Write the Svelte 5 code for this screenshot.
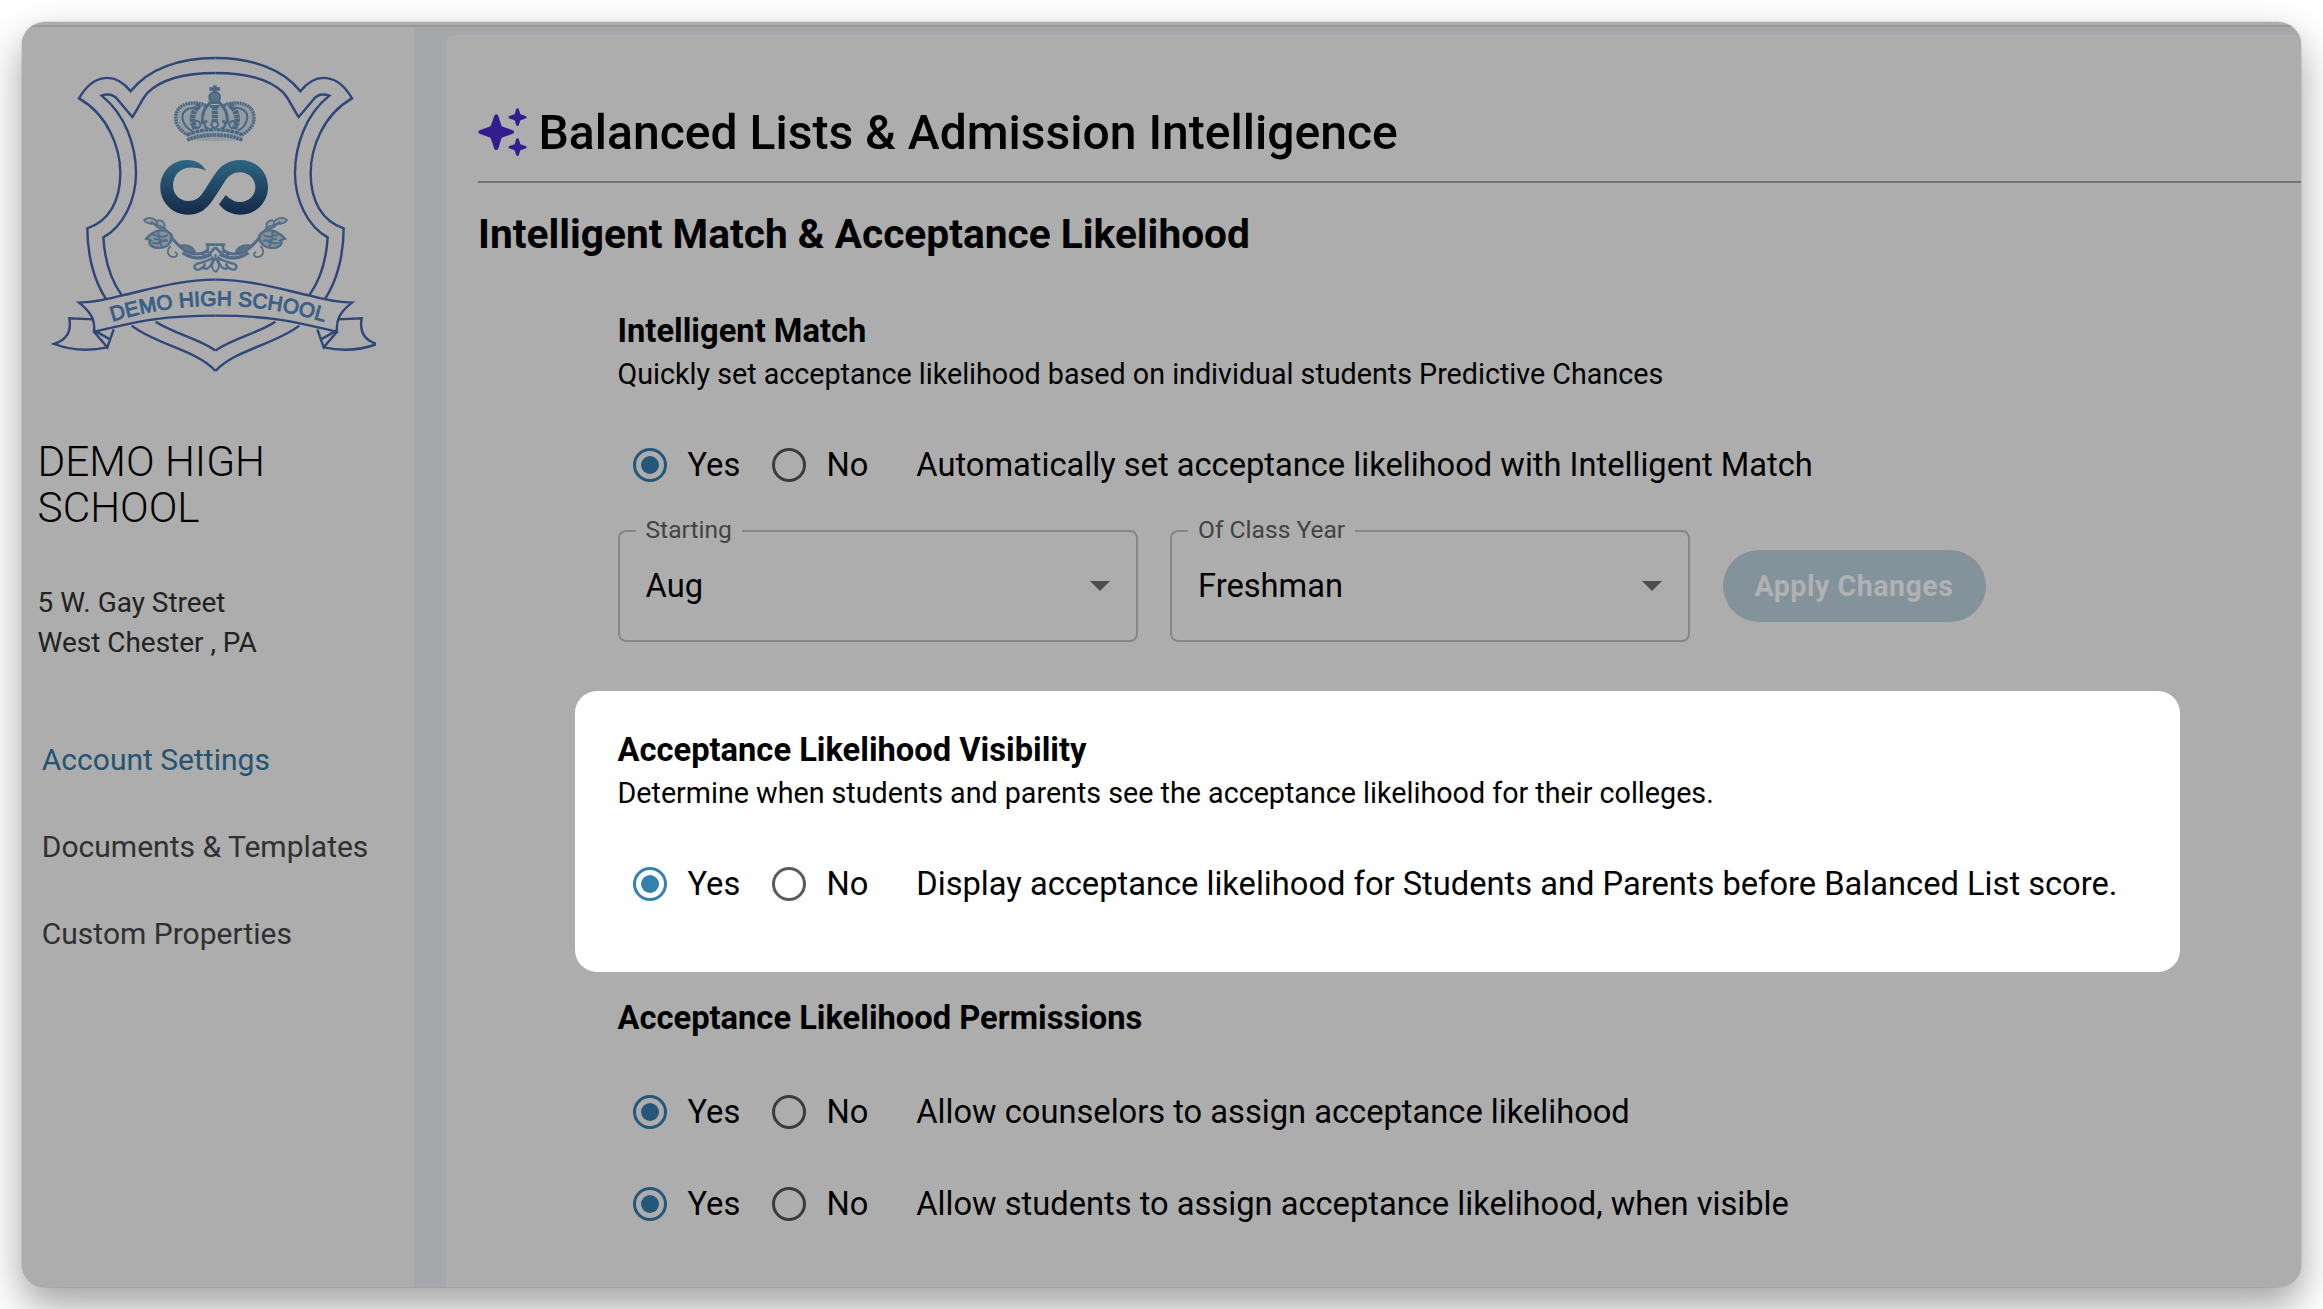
<script>
  const nav = [
    { label: 'Account Settings', active: true },
    { label: 'Documents & Templates', active: false },
    { label: 'Custom Properties', active: false }
  ];
  const selects = [
    { label: 'Starting', value: 'Aug' },
    { label: 'Of Class Year', value: 'Freshman' }
  ];
</script>

{#snippet radioRow(text)}
  <div class="radio-row">
    <span class="option"><i class="radio on"></i>Yes</span>
    <span class="option"><i class="radio"></i>No</span>
    <span class="caption">{text}</span>
  </div>
{/snippet}

{#snippet shieldHalf()}
  <path d="M646.500 174 C540 174 445 205 392 274 C345 215 280 220 237 295 C325 345 361 445 361 520 C361 605 325 665 262 685 C262 760 280 840 318 897" />
  <path d="M646.500 219 C570 219 490 232 443 278 C425 298 415 325 397 351 L354 300 C342 284 325 280 305 287 C378 345 408 440 408 520 C408 600 370 680 310 712 C314 780 333 840 364 884" />
  <path d="M395 977 C470 1035 590 1050 646.500 1113" />
  <path d="M467 965 C520 1000 605 1020 646.500 1052" />
  <path d="M646.500 839 C540 839 440 870 363 887 Q300 905 237 908 C272 935 286 960 282 995 C380 975 450 947 646.500 947" />
  <path d="M282 995 L322 1042 L341 988 M284 992 L330 1018" />
  <path d="M281 958 L208 955 C216 1000 195 1022 162 1032 C210 1050 270 1053 322 1042" />
{/snippet}

{#snippet crownHalf()}
  <path d="M560 404 C520 376 516 330 556 314 C590 304 615 308 640 322 L646.500 322 V424 L566 420 Z" fill="#60768c" fill-opacity="0.3" stroke="none" />
  <path d="M626 320 C600 303 533 300 529 350 C528 378 545 392 563 404" stroke-width="10" stroke-dasharray="6 2" />
  <path d="M600 326 C575 318 548 330 549 352 C551 374 562 384 578 393" stroke-width="6" />
  <path d="M601 314 C577 336 574 360 588 386" stroke-width="17" stroke-dasharray="10 2" />
  <path d="M634 308 C612 325 606 345 610 372" stroke-width="9" />
  <circle cx="592" cy="374" r="11" stroke-width="6" />
  <path d="M624 362 C612 366 612 384 628 386" stroke-width="7" />
  <path d="M562 405 C590 393 615 389 646.500 389" stroke-width="10" stroke-dasharray="12 2" />
  <path d="M564 420 C590 409 615 405 646.500 405" stroke-width="11" stroke-dasharray="8 2" />
{/snippet}

{#snippet garlandHalf()}
  <path d="M432 660 C448 648 462 656 470 664 C484 656 496 668 494 682 C480 688 468 680 462 672 C450 672 438 670 432 660 Z" fill="#60768c" fill-opacity="0.25" />
  <path d="M452 664 C468 676 478 678 486 678 M470 664 L474 680 M486 680 C500 690 506 694 512 706" stroke-width="5" />
  <path d="M438 716 C452 700 476 684 500 694 C520 702 520 716 508 730 C496 746 466 748 452 736 Q444 728 452 722 Q444 718 438 716 Z" stroke-width="7" fill="#60768c" fill-opacity="0.5" />
  <path d="M458 704 C476 708 492 716 504 704 M454 728 C472 734 486 726 500 718 M474 694 C478 712 476 726 486 740 M462 716 Q480 722 504 722" stroke-width="6" />
  <path d="M512 738 C498 750 502 770 520 771 C532 771 536 760 524 756" stroke-width="5" />
  <path d="M512 708 C524 726 538 740 556 752 C580 766 604 764 626 752" stroke-width="9" />
  <path d="M542 736 C560 732 582 740 586 758 C566 760 550 752 542 736 Z" fill="#5a7189" />
  <path d="M548 758 C572 776 606 780 634 762" stroke-width="10" />
  <path d="M646.500 734 L622 734 C626 744 624 752 614 756 C604 762 612 772 622 766 C634 758 638 748 646.500 742" stroke-width="8" />
  <path d="M640 770 C628 784 606 786 590 792 C578 798 584 812 598 808 C610 804 618 794 612 790 M640 774 C636 798 622 812 610 804" stroke-width="7" />
  <path d="M646.500 762 L646.500 780 M646.500 816 C632 806 634 792 646.500 776" stroke-width="5" />
{/snippet}

<div class="window">
  <div class="topbar"></div>
  <div class="body">
    <aside>
      <svg class="crest" viewBox="150 150 978 990" fill="none">
        <defs>
          <linearGradient id="loop" x1="0" y1="480" x2="0" y2="643" gradientUnits="userSpaceOnUse">
            <stop offset="0" stop-color="#2d6681" />
            <stop offset="1" stop-color="#152a49" />
          </linearGradient>
          <path id="banner" d="M337 965 Q650 868 975 966" />
        </defs>
        <g stroke="#2f4679" stroke-width="7.200">
          {@render shieldHalf()}
          <g transform="translate(1293 0) scale(-1 1)">{@render shieldHalf()}</g>
        </g>
        <g transform="translate(-2 0)" stroke="#4b6882">
          {@render crownHalf()}
          <g transform="translate(1293 0) scale(-1 1)">{@render crownHalf()}</g>
          <path d="M646.500 256 V282 M630 267 H662" stroke-width="11" />
          <circle cx="646" cy="292" r="16" fill="#5a7189" stroke-width="6" />
          <path d="M627 308 H665 M632 319 H660" stroke-width="8" />
          <path d="M646.500 320 V366" stroke-width="18" stroke-dasharray="10 2" />
          <circle cx="646" cy="373" r="10" stroke-width="6" />
        </g>
        <path fill="url(#loop)" d="M619 512 C603 488 585 480 560 480 C515 480 481 517 481 562 C481 607 517 644 562 644 C600 644 622 627 645 590 L674 545 C687 525 700 517 720 517 C746 517 766 537 766 562 C766 587 746 606 720 606 C703 606 690 598 677 585 L657 613 C672 633 695 644 722 644 C768 644 804 607 804 562 C804 516 768 480 722 480 C685 480 662 495 641 528 L612 573 C598 595 585 603 565 603 C539 603 519 584 519 556 C519 513 560 487 619 512 Z" />
        <g stroke="#526d87" stroke-width="5">
          {@render garlandHalf()}
          <g transform="translate(1293 0) scale(-1 1)">{@render garlandHalf()}</g>
        </g>
        <text class="banner-text"><textPath href="#banner" textLength="646">DEMO HIGH SCHOOL</textPath></text>
      </svg>
      <h4>DEMO HIGH SCHOOL</h4>
      <address>5 W. Gay Street<br />West Chester , PA</address>
      <nav>
        {#each nav as item}
          <span class:active={item.active}>{item.label}</span>
        {/each}
      </nav>
    </aside>

    <main>
      <h1>
        <svg class="sparkle" viewBox="0 0 49 49" fill="#331c90">
          <path d="M18.200 6.300 Q19.800 6.300 20.300 8 L23.600 18.200 L34 22 Q36.200 22.700 36.200 24 Q36.200 25.300 34 26 L23.600 29.800 L20.300 40.500 Q19.800 42 18.200 42 Q16.700 42 16.200 40.500 L12.600 29.800 L2.300 26 Q.300 25.300 .300 24 Q.300 22.700 2.300 22 L12.600 18.200 L16.200 8 Q16.700 6.300 18.200 6.300 Z" />
          <path id="star" d="M39.500 .300 Q40.500 .300 40.800 1.300 L42.400 6.200 L47.500 8 Q48.600 8.400 48.600 9.200 Q48.600 10 47.500 10.400 L42.400 12.200 L40.800 17.100 Q40.500 18.100 39.500 18.100 Q38.500 18.100 38.200 17.100 L36.600 12.200 L31.500 10.400 Q30.500 10 30.500 9.200 Q30.500 8.400 31.500 8 L36.600 6.200 L38.200 1.300 Q38.500 .300 39.500 .300 Z" />
          <use href="#star" y="30" />
        </svg>
        Balanced Lists &amp; Admission Intelligence
      </h1>
      <h2>Intelligent Match &amp; Acceptance Likelihood</h2>

      <section>
        <h3>Intelligent Match</h3>
        <p>Quickly set acceptance likelihood based on individual students Predictive Chances</p>
        {@render radioRow('Automatically set acceptance likelihood with Intelligent Match')}
        <div class="controls">
          {#each selects as s}
            <div class="select">
              <span class="legend">{s.label}</span>
              <span>{s.value}</span>
              <svg viewBox="0 0 20 10" width="20" height="10"><path d="M0 0H20L10 10Z" fill="#4e4e4e" /></svg>
            </div>
          {/each}
          <button disabled>Apply Changes</button>
        </div>
      </section>

      <section class="spotlight">
        <h3>Acceptance Likelihood Visibility</h3>
        <p>Determine when students and parents see the acceptance likelihood for their colleges.</p>
        {@render radioRow('Display acceptance likelihood for Students and Parents before Balanced List score.')}
      </section>

      <section class="permissions">
        <h3>Acceptance Likelihood Permissions</h3>
        {@render radioRow('Allow counselors to assign acceptance likelihood')}
        {@render radioRow('Allow students to assign acceptance likelihood, when visible')}
      </section>
    </main>
  </div>
</div>

<style>
  :global(body) {
    background: #fff;
    overflow: hidden;
  }
  .window {
    box-sizing: border-box;
    width: 2279px;
    height: 1265px;
    margin: 22px;
    border-radius: 23px;
    overflow: hidden;
    display: flex;
    flex-direction: column;
    background: #adadad;
    color: #020202;
    font-family: Roboto, 'Liberation Sans', sans-serif;
    box-shadow: 0 0 0 1px rgba(0, 0, 0, 0.08), 0 18px 40px rgba(0, 0, 0, 0.38);
  }
  .topbar {
    flex: none;
    height: 3px;
    border-bottom: 2px solid #999;
  }
  .body {
    flex: 1;
    display: flex;
    background: #a5a7aa;
  }
  aside {
    box-sizing: border-box;
    width: 392px;
    flex: none;
    padding: 23px 0 0 15.6px;
    background: #adadad;
  }
  .crest {
    display: block;
    width: 326px;
    height: 330px;
    margin-left: 12.4px;
  }
  .banner-text {
    font: 62px 'Liberation Sans', sans-serif;
    fill: #3a5f86;
    stroke: #3a5f86;
    stroke-width: 3px;
  }
  h1, h2, h3, h4, p {
    margin: 0;
  }
  h4 {
    width: 300px;
    margin-top: 59px;
    font-size: 42.3px;
    font-weight: 300;
    line-height: 46px;
  }
  address {
    margin-top: 52px;
    font-size: 27.95px;
    font-style: normal;
    line-height: 40px;
    color: #222;
  }
  nav {
    display: flex;
    flex-direction: column;
    gap: 46.8px;
    margin: 77px 0 0 4.2px;
    font-size: 30.02px;
    line-height: 40px;
    color: #303030;
  }
  nav .active {
    color: #24546f;
  }
  main {
    box-sizing: border-box;
    flex: 1;
    margin: 8px 0 0 32px;
    padding: 70px 0 0 32px;
    border-top-left-radius: 8px;
    background: #adadad;
  }
  h1 {
    display: flex;
    align-items: center;
    gap: 12px;
    padding-bottom: 19.6px;
    border-bottom: 2px solid #727272;
    font-size: 48.05px;
    font-weight: 500;
    line-height: 56px;
    white-space: nowrap;
  }
  .sparkle {
    width: 49px;
    height: 49px;
    margin-left: -0.5px;
    margin-top: -2px;
  }
  h2 {
    margin-top: 27px;
    font-size: 40.68px;
    font-weight: 700;
    line-height: 48px;
  }
  section {
    margin: 51px 0 0 139.5px;
  }
  h3 {
    font-size: 32.68px;
    font-weight: 700;
    line-height: 44px;
  }
  p {
    margin-top: 1.2px;
    font-size: 28.68px;
    line-height: 40px;
  }
  .radio-row {
    display: grid;
    grid-template-columns: 139px 144px auto;
    margin-top: 48.8px;
    padding-left: 15.8px;
    font-size: 32.67px;
    line-height: 44px;
    white-space: nowrap;
  }
  .option {
    display: flex;
    align-items: center;
    gap: 21.2px;
  }
  .radio {
    box-sizing: border-box;
    width: 34px;
    height: 34px;
    margin-right: -1px;
    border: 3.4px solid #3b3b3b;
    border-radius: 50%;
    display: grid;
    place-items: center;
  }
  .radio.on {
    border-color: #24577a;
  }
  .radio.on::after {
    content: '';
    width: 18px;
    height: 18px;
    border-radius: 50%;
    background: #24577a;
  }
  .controls {
    display: flex;
    align-items: center;
    gap: 32.5px;
    margin-top: 43.4px;
  }
  .select {
    position: relative;
    box-sizing: border-box;
    width: 520px;
    height: 112px;
    display: flex;
    align-items: center;
    justify-content: space-between;
    padding: 0 26px;
    border: 2px solid #868686;
    border-radius: 8px;
    font-size: 32.67px;
    line-height: 44px;
  }
  .legend {
    position: absolute;
    left: 16px;
    top: -16.2px;
    padding: 0 10px;
    background: #adadad;
    color: #434343;
    font-size: 24.6px;
    line-height: 28px;
  }
  button {
    width: 263px;
    height: 72px;
    padding: 0;
    border: 0;
    border-radius: 36px;
    background: #84929b;
    color: #b0b1b2;
    font: 700 28.6px Roboto, sans-serif;
    letter-spacing: 0.5px;
  }
  .spotlight {
    box-sizing: border-box;
    width: 1605.5px;
    height: 281.5px;
    margin: 49px 0 0 96.5px;
    padding: 37px 0 0 43px;
    border-radius: 22px;
    background: #fff;
  }
  .spotlight .radio {
    border-color: #5a5a5a;
  }
  .spotlight .radio.on {
    border-color: #3480ae;
  }
  .spotlight .radio.on::after {
    background: #3480ae;
  }
  .permissions {
    margin-top: 23.6px;
  }
  .permissions .radio-row {
    margin-top: 48px;
  }
  .permissions h3 + .radio-row {
    margin-top: 50px;
  }
</style>
